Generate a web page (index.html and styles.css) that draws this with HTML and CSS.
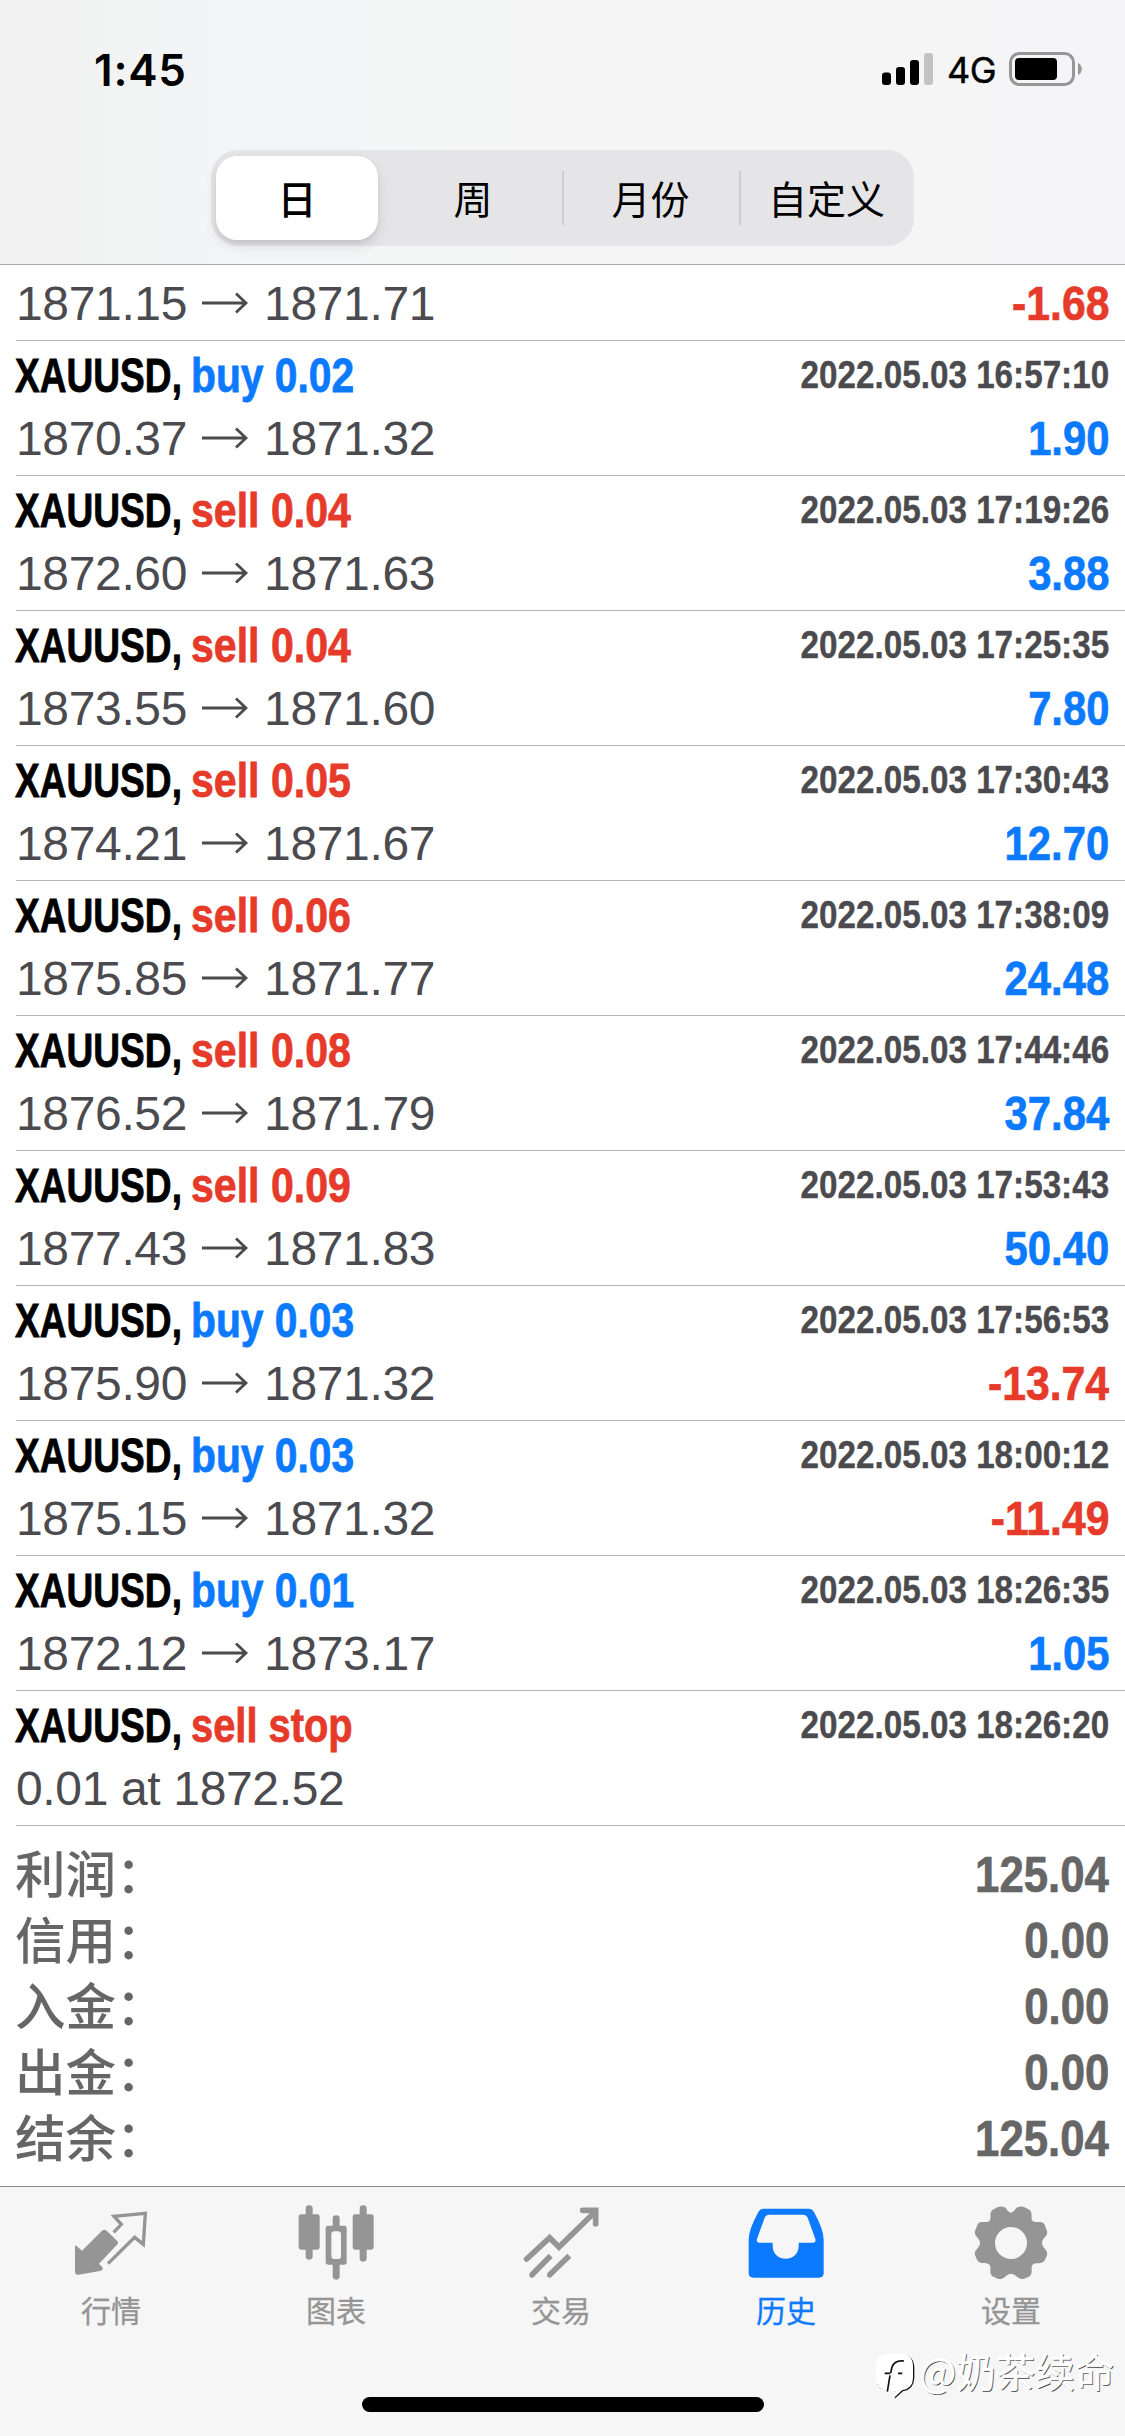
FILE: index.html
```html
<!DOCTYPE html>
<html lang="zh-CN">
<head>
<meta charset="utf-8">
<title>历史</title>
<link rel="stylesheet" href="styles.css">
</head>
<body>
<div class="screen">
  <header class="header">
    <div class="status">
      <span class="clock">1:45</span>
      <div class="indicators">
        <svg class="signal" width="51" height="34" viewBox="0 0 51 34"><rect x="0" y="20.5" width="9" height="12.5" rx="3"/><rect x="14" y="15" width="9" height="18" rx="3"/><rect x="28" y="8" width="9" height="25" rx="3"/><rect x="42" y="1" width="9" height="32" rx="3" fill="#c3c3c4"/></svg>
        <span class="network">4G</span>
        <svg class="battery" width="74" height="34" viewBox="0 0 74 34"><rect x="1.5" y="1.5" width="63" height="31" rx="9" fill="none" stroke="#969697" stroke-width="3"/><rect x="6" y="6" width="42" height="22" rx="4"/><path d="M69 11c5 2 5 10 0 12z" fill="#969697"/></svg>
      </div>
    </div>
    <nav class="segments">
      <span class="segment active">日</span>
      <span class="segment week">周</span>
      <span class="segment divided">月份</span>
      <span class="segment divided">自定义</span>
    </nav>
  </header>

  <main class="history">
    <div class="deal partial"><div class="bottom"><span class="price">1871.15<svg class="arrow" viewBox="0 0 46 22"><path d="M0 11H43M34 1.500L44 11L34 20.500"/></svg>1871.71</span><b class="amount loss">-1.68</b></div></div>
    <div class="deal"><div class="top"><b class="symbol">XAUUSD,</b><b class="side buy">buy 0.02</b><b class="time">2022.05.03 16:57:10</b></div><div class="bottom"><span class="price">1870.37<svg class="arrow" viewBox="0 0 46 22"><path d="M0 11H43M34 1.500L44 11L34 20.500"/></svg>1871.32</span><b class="amount">1.90</b></div></div>
    <div class="deal"><div class="top"><b class="symbol">XAUUSD,</b><b class="side sell">sell 0.04</b><b class="time">2022.05.03 17:19:26</b></div><div class="bottom"><span class="price">1872.60<svg class="arrow" viewBox="0 0 46 22"><path d="M0 11H43M34 1.500L44 11L34 20.500"/></svg>1871.63</span><b class="amount">3.88</b></div></div>
    <div class="deal"><div class="top"><b class="symbol">XAUUSD,</b><b class="side sell">sell 0.04</b><b class="time">2022.05.03 17:25:35</b></div><div class="bottom"><span class="price">1873.55<svg class="arrow" viewBox="0 0 46 22"><path d="M0 11H43M34 1.500L44 11L34 20.500"/></svg>1871.60</span><b class="amount">7.80</b></div></div>
    <div class="deal"><div class="top"><b class="symbol">XAUUSD,</b><b class="side sell">sell 0.05</b><b class="time">2022.05.03 17:30:43</b></div><div class="bottom"><span class="price">1874.21<svg class="arrow" viewBox="0 0 46 22"><path d="M0 11H43M34 1.500L44 11L34 20.500"/></svg>1871.67</span><b class="amount">12.70</b></div></div>
    <div class="deal"><div class="top"><b class="symbol">XAUUSD,</b><b class="side sell">sell 0.06</b><b class="time">2022.05.03 17:38:09</b></div><div class="bottom"><span class="price">1875.85<svg class="arrow" viewBox="0 0 46 22"><path d="M0 11H43M34 1.500L44 11L34 20.500"/></svg>1871.77</span><b class="amount">24.48</b></div></div>
    <div class="deal"><div class="top"><b class="symbol">XAUUSD,</b><b class="side sell">sell 0.08</b><b class="time">2022.05.03 17:44:46</b></div><div class="bottom"><span class="price">1876.52<svg class="arrow" viewBox="0 0 46 22"><path d="M0 11H43M34 1.500L44 11L34 20.500"/></svg>1871.79</span><b class="amount">37.84</b></div></div>
    <div class="deal"><div class="top"><b class="symbol">XAUUSD,</b><b class="side sell">sell 0.09</b><b class="time">2022.05.03 17:53:43</b></div><div class="bottom"><span class="price">1877.43<svg class="arrow" viewBox="0 0 46 22"><path d="M0 11H43M34 1.500L44 11L34 20.500"/></svg>1871.83</span><b class="amount">50.40</b></div></div>
    <div class="deal"><div class="top"><b class="symbol">XAUUSD,</b><b class="side buy">buy 0.03</b><b class="time">2022.05.03 17:56:53</b></div><div class="bottom"><span class="price">1875.90<svg class="arrow" viewBox="0 0 46 22"><path d="M0 11H43M34 1.500L44 11L34 20.500"/></svg>1871.32</span><b class="amount loss">-13.74</b></div></div>
    <div class="deal"><div class="top"><b class="symbol">XAUUSD,</b><b class="side buy">buy 0.03</b><b class="time">2022.05.03 18:00:12</b></div><div class="bottom"><span class="price">1875.15<svg class="arrow" viewBox="0 0 46 22"><path d="M0 11H43M34 1.500L44 11L34 20.500"/></svg>1871.32</span><b class="amount loss">-11.49</b></div></div>
    <div class="deal"><div class="top"><b class="symbol">XAUUSD,</b><b class="side buy">buy 0.01</b><b class="time">2022.05.03 18:26:35</b></div><div class="bottom"><span class="price">1872.12<svg class="arrow" viewBox="0 0 46 22"><path d="M0 11H43M34 1.500L44 11L34 20.500"/></svg>1873.17</span><b class="amount">1.05</b></div></div>
    <div class="deal"><div class="top"><b class="symbol">XAUUSD,</b><b class="side sell stop">sell stop</b><b class="time">2022.05.03 18:26:20</b></div><div class="bottom"><span class="price order">0.01 at 1872.52</span></div></div>
    <div class="totals">
      <div class="total"><span class="label">利润：</span><b class="sum">125.04</b></div>
      <div class="total"><span class="label">信用：</span><b class="sum">0.00</b></div>
      <div class="total"><span class="label">入金：</span><b class="sum">0.00</b></div>
      <div class="total"><span class="label">出金：</span><b class="sum">0.00</b></div>
      <div class="total"><span class="label">结余：</span><b class="sum">125.04</b></div>
    </div>
  </main>

  <footer class="tabbar">
    <nav class="tabs">
      <div class="tab">
        <svg class="icon" viewBox="213 70 240 240"><path d="M225 201Q225 195 230 199L246 213L306 153Q313 147 320 153L351 183Q357 189 351 195L297 252L307 263Q311 269 303 273L236 285Q225 286 225 276Z" fill="#959595"/><path d="M341 158L364 134L342 110L436 101L430 194L404 173L324 252" fill="none" stroke="#959595" stroke-width="10"/></svg>
        <span>行情</span>
      </div>
      <div class="tab">
        <svg class="icon" viewBox="889 70 240 240" fill="#959595"><rect x="897" y="104" width="63" height="106" rx="7"/><rect x="918" y="77" width="21" height="163" rx="10"/><rect x="1059" y="104" width="63" height="106" rx="7"/><rect x="1080" y="77" width="21" height="169" rx="10"/><rect x="978" y="138" width="63" height="117" rx="7"/><rect x="999" y="107" width="21" height="40" rx="10"/><rect x="999" y="240" width="21" height="60" rx="10"/><rect x="995" y="155" width="29" height="83" rx="10" fill="#f7f7f7"/></svg>
        <span>图表</span>
      </div>
      <div class="tab">
        <svg class="icon" viewBox="124 70 240 240" fill="none" stroke="#959595" stroke-width="17"><path d="M141 238L210 174L238 202L345 98" stroke-linecap="round"/><path d="M309 92H348V132" stroke-linecap="round"/><path d="M213 228L157 285" /><path d="M269 228L210 285"/><circle cx="157" cy="286" r="8" fill="#959595" stroke="none"/><circle cx="210" cy="286" r="8" fill="#959595" stroke="none"/></svg>
        <span>交易</span>
      </div>
      <div class="tab current">
        <svg class="icon" viewBox="799 70 240 240"><path fill="#0b7aff" fill-rule="evenodd" d="M852 87H987Q998 87 1003 97Q1032 150 1032 180V280Q1032 294 1018 294H821Q807 294 807 280V180Q807 150 836 97Q841 87 852 87ZM869 105Q859 105 855 114L832 178Q829 189 839 189H879V198C879 250 957 250 957 198V189H1000Q1010 189 1007 178L984 114Q980 105 970 105Z"/></svg>
        <span>历史</span>
      </div>
      <div class="tab">
        <svg class="icon" viewBox="395 70 240 240"><path fill="#959595" fill-rule="evenodd" d="M515 99C527 97 527 82 540 81Q548 79 556 83L571 91C582 101 572 116 580 124C589 131 601 123 612 130Q616 134 618 141L623 154C627 170 608 174 608 190C608 206 627 210 623 226L617 240C607 257 590 245 580 255C572 263 583 277 571 290L555 297C536 303 530 282 515 282C500 282 494 303 475 297L459 290C447 277 458 263 450 255C440 245 423 257 413 240L407 226C403 210 422 206 422 190C422 174 403 170 407 154L412 141Q414 134 418 130C429 123 441 131 450 124C458 116 448 101 459 91L474 83Q482 79 490 81C503 82 503 97 515 99ZM515 142a48 48 0 1 0 0 96a48 48 0 1 0 0-96Z"/></svg>
        <span>设置</span>
      </div>
    </nav>
    <div class="home"></div>
    <div class="credit">
      <svg width="44" height="50" viewBox="100 514 132 150"><path d="M148 525H186Q222 528 221 568V594Q220 629 187 635L162 657L164 634H140Q111 628 108 604V560Z" fill="#111"/><path d="M140 522H184Q217 526 217 560V594Q217 626 184 632L160 654L164 634L140 636Q107 626 105 598V560Q107 526 140 522Z" fill="#fff"/><path d="M190 544Q162 540 154 562L150 580M148 587L140 636M132 581H149M172 581H185" fill="none" stroke="#111" stroke-width="5"/></svg>
      <span>@奶茶续命</span>
    </div>
  </footer>
</div>
</body>
</html>
```
FILE: styles.css
```css
* { box-sizing: border-box; }
body { margin: 0; background: #fff; font-family: "Liberation Sans", "Noto Sans CJK SC", sans-serif; }
.screen { width: 1125px; height: 2436px; display: flex; flex-direction: column; overflow: hidden; }

.header { height: 265px; flex: none; border-bottom: 1px solid #a9a9ab; background: linear-gradient(90deg, #f0f0f0 0, #f4f5f6 20%, #f5f5f5 60%, #f5f5f7 100%); }
.status { height: 150px; padding: 0 42px 0 94px; display: flex; justify-content: space-between; align-items: flex-start; }
.clock { margin-top: 43px; font: 600 44px/54px Inter, sans-serif; letter-spacing: 0.8px; }
.indicators { margin-top: 52px; height: 34px; display: flex; align-items: center; }
.network { width: 49px; margin: 1px 13px 0 14px; font: 400 36px/34px Inter, sans-serif; letter-spacing: -0.5px; white-space: nowrap; -webkit-text-stroke: .4px #000; }
.segments { width: 703px; height: 96px; margin-left: 211px; padding: 6px 0 6px 5px; display: grid; grid-template-columns: 162px 184px 177px 175px; border-radius: 27px; background: #e5e5e7; }
.segment { position: relative; display: flex; align-items: center; justify-content: center; padding-bottom: 3px; font: 400 39px/80px "Noto Sans CJK SC", sans-serif; }
.segment.active { border-radius: 21px; background: #fff; font-weight: 500; box-shadow: 0 6px 14px rgba(0, 0, 0, .1), 0 3px 4px rgba(0, 0, 0, .06); }
.week { padding-left: 6px; }
.segment.divided::before { content: ""; position: absolute; left: 0; top: 15px; width: 2px; height: 54px; background: #cdcdd0; }

.history { height: 1921px; flex: none; padding-left: 16px; }
.deal { height: 135px; padding-right: 16px; border-bottom: 1px solid #b5b5b7; }
.partial { height: 76px; }
.partial .bottom { padding-top: 7px; }
.top { height: 66px; display: grid; grid-template-columns: 176px 1fr auto; align-items: start; line-height: 69px; }
.symbol, .side { font-size: 49px; white-space: nowrap; transform-origin: 0 50%; -webkit-text-stroke: .8px currentColor; }
.symbol { margin-left: -1px; transform: scaleX(.757); }
.side { margin-left: -1px; }
.buy { color: #0b7aff; transform: scaleX(.832); }
.sell { color: #e63a2b; transform: scaleX(.838); }
.stop { transform: scaleX(.813); }
.time { color: #4b4b4f; font-size: 39px; line-height: 67px; transform: scaleX(.852); transform-origin: 100% 50%; -webkit-text-stroke: .4px currentColor; }
.bottom { display: flex; justify-content: space-between; line-height: 64px; }
.price { color: #4b4b4f; font-size: 48px; letter-spacing: -.35px; white-space: nowrap; }
.arrow { width: 46px; height: 22px; margin: 0 16px 6px 15px; fill: none; stroke: #4b4b4f; stroke-width: 2.8; }
.amount { color: #0b7aff; font-size: 48px; transform: scaleX(.87); transform-origin: 100% 50%; -webkit-text-stroke: .7px currentColor; }
.loss { color: #e63a2b; transform: scaleX(.89); }

.totals { padding: 16px 16px 0 0; }
.total { height: 66px; display: flex; justify-content: space-between; color: #666; }
.label { margin: -4px 0 0 -1px; font: 500 50.5px/66px "Noto Sans CJK SC", sans-serif; }
.sum { font-size: 50px; line-height: 66px; transform: scaleX(.875); transform-origin: 100% 50%; -webkit-text-stroke: .7px currentColor; }

.tabbar { position: relative; flex: 1; border-top: 1px solid #8a8a8a; background: #f6f6f6; }
.tabs { width: 1125px; margin-left: -1.5px; padding-top: 16px; display: grid; grid-template-columns: repeat(5, 1fr); }
.tab { display: flex; flex-direction: column; align-items: center; color: #959595; font: 400 30px/40px "Noto Sans CJK SC", sans-serif; }
.tab span { margin-top: 6px; -webkit-text-stroke: .3px currentColor; }
.icon { width: 80px; height: 80px; }
.current { color: #0b7aff; }
.home { width: 402px; height: 15px; margin: 68px auto 0; border-radius: 8px; background: #000; }
.credit { position: absolute; left: 874px; top: 164px; display: flex; align-items: center; color: #fff; font: 400 39.5px/50px "Noto Sans CJK SC", sans-serif; white-space: nowrap; text-shadow: 1px 1px 0 #444; }
.credit span { margin: -13px 0 0 1px; -webkit-text-stroke: .5px #fff; }
```
